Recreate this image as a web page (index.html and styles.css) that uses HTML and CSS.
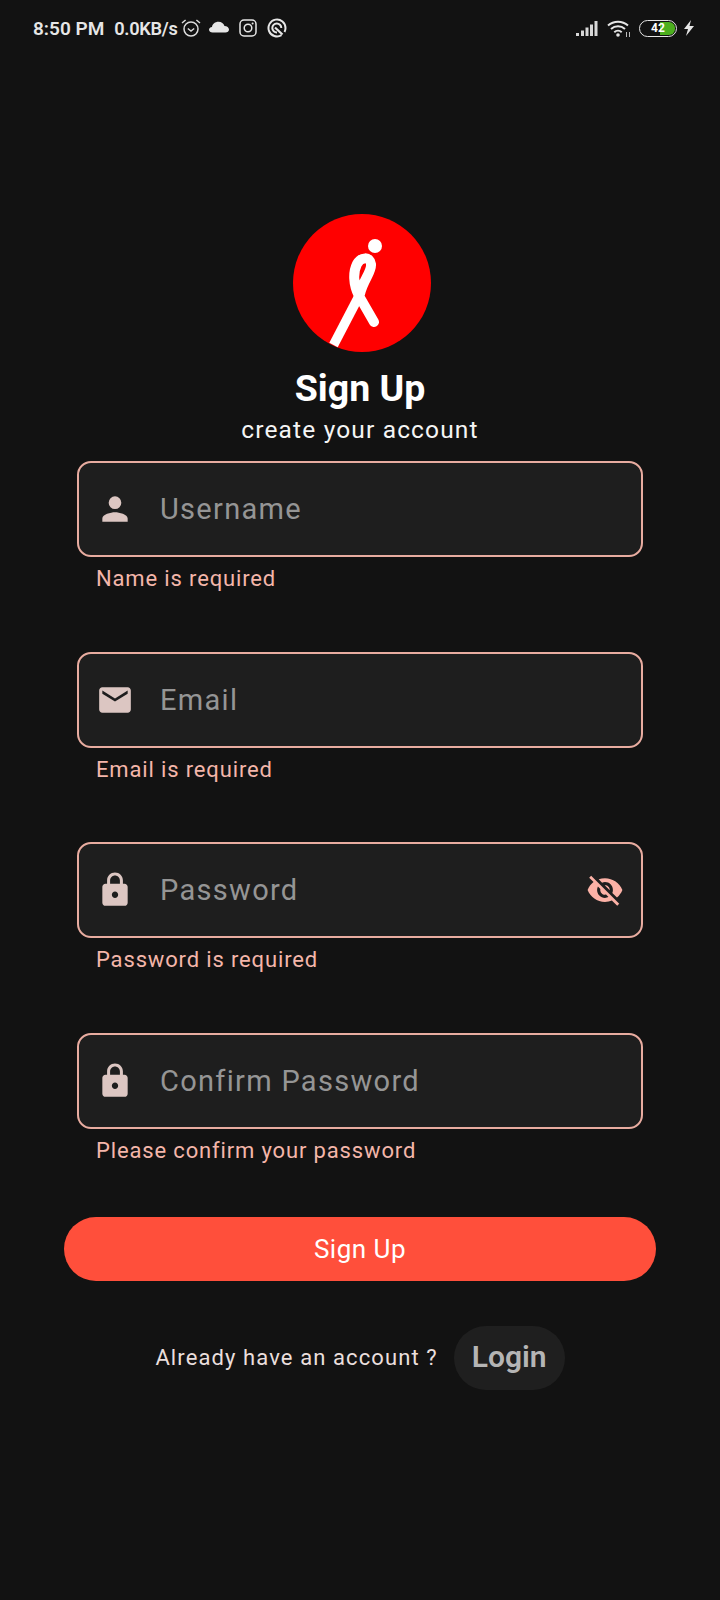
FILE: index.html
```html
<!DOCTYPE html>
<html lang="en">
<head>
    <meta charset="UTF-8">
    <meta name="viewport" content="width=device-width, initial-scale=1.0">
    <title>Sign Up</title>
    <link rel="stylesheet" href="styles.css">
</head>
<body>
    <div class="status-bar">
        <div class="status-left">
            <span class="status-time">8:50 PM</span>
            <span class="status-speed">0.0KB/s</span>
            <svg class="status-icon alarm-icon" viewBox="0 0 20 20"><circle cx="10" cy="11" r="7" fill="none" stroke="#ddd" stroke-width="1.5"/><path d="M6.800 10.500 10 13l3.200-2.500" fill="none" stroke="#ddd" stroke-width="1.400"/><path d="M1 5l3.600-3M19 5l-3.600-3" stroke="#ddd" stroke-width="1.500"/></svg>
            <svg class="status-icon cloud-icon" viewBox="0 0 20 12"><path d="M3.500 11.500C1.500 11.500 0 10.300 0 8.700 0 7.300 1.200 6.200 3 6 3.500 3 6 .8 9.500.8c3 0 5.200 1.700 6 4.200 2.500.2 4.500 1.600 4.500 3.500 0 1.800-1.600 3-3.500 3z" fill="#e6e6e6"/></svg>
            <svg class="status-icon insta-icon" viewBox="0 0 18 18"><rect x="1" y="1" width="16" height="16" rx="4" fill="none" stroke="#e6e6e6" stroke-width="1.500"/><circle cx="9" cy="9" r="3.800" fill="none" stroke="#e6e6e6" stroke-width="1.500"/><circle cx="13.600" cy="4.400" r="1" fill="#e6e6e6"/></svg>
            <svg class="status-icon q-icon" viewBox="0 0 20 20"><path d="M14.500 17.200A8.500 8.500 0 1 1 18.500 10c0 1.500-.4 2.800-1 4" fill="none" stroke="#e6e6e6" stroke-width="2"/><path d="M14.300 10A4.500 4.500 0 1 0 10 14.500" fill="none" stroke="#e6e6e6" stroke-width="2"/><path d="M8 9.500l7.500 7" stroke="#e6e6e6" stroke-width="2.200" fill="none"/></svg>
        </div>
        <div class="status-right">
            <svg class="signal-icon" viewBox="0 0 22 16"><path d="M0 13h3v3H0zM5 10.500h3V16H5zM9.500 7.500h3V16h-3zM14 4.500h3V16h-3zM18.500 1h3v15h-3z" fill="#d8d8d8"/></svg>
            <svg class="wifi-icon" viewBox="0 0 24 18"><path d="M1 6.500a15 15 0 0 1 20 0M4 10a10.500 10.500 0 0 1 14 0M7.300 13.200a5.600 5.600 0 0 1 7.400 0" fill="none" stroke="#e6e6e6" stroke-width="2"/><circle cx="11" cy="16" r="1.800" fill="#e6e6e6"/><path d="M19 13h1v5h-1zM22 13h1v5h-1z" fill="#bbb"/></svg>
            <div class="battery"><span class="battery-level"></span><span class="battery-text">42</span></div>
            <svg class="bolt-icon" viewBox="0 0 12 16"><path d="M8 0 1 9h4l-2 7 8-10H6.500z" fill="#e6e6e6"/></svg>
        </div>
    </div>

    <div class="logo">
        <svg viewBox="0 0 138 138">
            <circle cx="69" cy="69" r="69" fill="#ff0000"/>
            <path d="M40.500 131 65 84" fill="none" stroke="#fff" stroke-width="9.500"/>
            <path d="M81 108 66 82C60 70 60 58 64 50 68 43 77 42 78 50 79 58 70 66 67 80" fill="none" stroke="#fff" stroke-width="10" stroke-linecap="round"/>
            <circle cx="82" cy="32" r="7" fill="#fff"/>
        </svg>
    </div>
    <h1 class="title">Sign Up</h1>
    <p class="subtitle">create your account</p>

    <form class="signup-form">
        <div class="field">
            <div class="input-box">
                <svg class="field-icon" viewBox="0 0 24 24"><path d="M12 12a4 4 0 1 0 0-8 4 4 0 0 0 0 8zm0 2c-2.670 0-8 1.340-8 4v2h16v-2c0-2.660-5.330-4-8-4z"/></svg>
                <span class="placeholder">Username</span>
            </div>
            <div class="error">Name is required</div>
        </div>
        <div class="field">
            <div class="input-box">
                <svg class="field-icon" viewBox="0 0 24 24"><path d="M20 4H4c-1.100 0-2 .9-2 2v12c0 1.100.9 2 2 2h16c1.100 0 2-.9 2-2V6c0-1.100-.9-2-2-2zm0 4-8 5-8-5V6l8 5 8-5v2z"/></svg>
                <span class="placeholder">Email</span>
            </div>
            <div class="error">Email is required</div>
        </div>
        <div class="field">
            <div class="input-box">
                <svg class="field-icon" viewBox="0 0 24 24"><path d="M18 8h-1V6c0-2.760-2.240-5-5-5S7 3.240 7 6v2H6c-1.100 0-2 .9-2 2v10c0 1.100.9 2 2 2h12c1.100 0 2-.9 2-2V10c0-1.100-.9-2-2-2zm-6 9c-1.100 0-2-.9-2-2s.9-2 2-2 2 .9 2 2-.9 2-2 2zm3.100-9H8.900V6c0-1.710 1.390-3.100 3.100-3.100s3.100 1.390 3.100 3.100v2z"/></svg>
                <span class="placeholder">Password</span>
                <svg class="eye-icon" viewBox="0 0 24 24"><path d="M12 7c2.760 0 5 2.240 5 5 0 .65-.13 1.260-.36 1.830l2.920 2.920c1.510-1.260 2.700-2.890 3.430-4.750-1.730-4.390-6-7.500-11-7.500-1.400 0-2.740.25-3.980.7l2.160 2.160C10.740 7.130 11.350 7 12 7zM2 4.270l2.280 2.280.46.46C3.080 8.300 1.780 10.020 1 12c1.730 4.390 6 7.500 11 7.500 1.550 0 3.030-.3 4.380-.84l.42.42L19.730 22 21 20.730 3.270 3 2 4.270zM7.530 9.800l1.550 1.550c-.05.21-.08.430-.08.650 0 1.660 1.340 3 3 3 .22 0 .44-.03.650-.08l1.550 1.550c-.67.33-1.410.53-2.200.53-2.760 0-5-2.240-5-5 0-.79.2-1.530.53-2.200zm4.310-.78 3.150 3.150.02-.16c0-1.660-1.340-3-3-3l-.17.010z"/></svg>
            </div>
            <div class="error">Password is required</div>
        </div>
        <div class="field">
            <div class="input-box">
                <svg class="field-icon" viewBox="0 0 24 24"><path d="M18 8h-1V6c0-2.760-2.240-5-5-5S7 3.240 7 6v2H6c-1.100 0-2 .9-2 2v10c0 1.100.9 2 2 2h12c1.100 0 2-.9 2-2V10c0-1.100-.9-2-2-2zm-6 9c-1.100 0-2-.9-2-2s.9-2 2-2 2 .9 2 2-.9 2-2 2zm3.100-9H8.900V6c0-1.710 1.390-3.100 3.100-3.100s3.100 1.390 3.100 3.100v2z"/></svg>
                <span class="placeholder">Confirm Password</span>
            </div>
            <div class="error">Please confirm your password</div>
        </div>
    </form>

    <button class="signup-btn" type="button">Sign Up</button>

    <div class="login-row">
        <span class="login-text">Already have an account ?</span>
        <button class="login-btn" type="button">Login</button>
    </div>
</body>
</html>
```

FILE: styles.css
```css
* {
    box-sizing: border-box;
}

body {
    margin: 0;
    min-height: 1600px;
    background-color: #121212;
    color: #fff;
    font-family: Roboto, sans-serif;
    display: flex;
    flex-direction: column;
    align-items: center;
}

/* status bar */
.status-bar {
    width: 100%;
    height: 56px;
    padding: 0 33px;
    display: flex;
    align-items: center;
    justify-content: space-between;
    color: #e6e6e6;
}

.status-left {
    display: flex;
    align-items: center;
}

.status-time,
.status-speed {
    font-size: 19px;
    font-weight: 600;
}

.status-speed {
    margin-left: 10px;
    font-size: 18.200px;
    letter-spacing: -0.3px;
}

.status-icon {
    display: block;
}

.alarm-icon {
    width: 20px;
    height: 20px;
    margin-left: 4px;
}

.cloud-icon {
    width: 20px;
    height: 12px;
    margin-left: 8px;
    margin-bottom: 3px;
}

.insta-icon {
    width: 18px;
    height: 18px;
    margin-left: 10px;
}

.q-icon {
    width: 20px;
    height: 20px;
    margin-left: 10px;
}

.status-right {
    display: flex;
    align-items: center;
    margin-right: -8px;
}

.signal-icon {
    width: 22px;
    height: 16px;
}

.wifi-icon {
    width: 24px;
    height: 18px;
    margin-left: 9px;
}

.battery {
    position: relative;
    width: 38px;
    height: 17px;
    margin-left: 8px;
    border: 1.500px solid #e6e6e6;
    border-radius: 9px;
    overflow: hidden;
}

.battery-level {
    position: absolute;
    top: 1px;
    bottom: 1px;
    right: 1px;
    width: 15px;
    background-color: #4caf1e;
    border-radius: 0 6px 6px 0;
}

.battery-text {
    position: relative;
    display: block;
    font-size: 12px;
    line-height: 14px;
    font-weight: 700;
    text-align: center;
    color: #fff;
}

.bolt-icon {
    width: 12px;
    height: 16px;
    margin-left: 6px;
}

/* logo and heading */
.logo {
    margin-top: 158px;
    margin-left: 4px;
    width: 138px;
    height: 138px;
}

.logo svg {
    display: block;
    width: 138px;
    height: 138px;
}

.title {
    margin: 9px 0 0;
    font-size: 37.500px;
    line-height: 54px;
    font-weight: 700;
    color: #fff;
}

.subtitle {
    margin: 0;
    font-size: 24.500px;
    line-height: 30px;
    letter-spacing: 1.150px;
    color: #f5f5f5;
}

/* form */
.signup-form {
    width: 566px;
    margin-top: 16px;
    display: flex;
    flex-direction: column;
}

.field {
    height: 190.500px;
}

.input-box {
    height: 96px;
    padding: 0 17px;
    display: flex;
    align-items: center;
    background-color: #1e1e1e;
    border: 2px solid #e8aca0;
    border-radius: 14px;
}

.field-icon {
    width: 38px;
    height: 38px;
    fill: #dcc6c2;
    flex-shrink: 0;
}

.placeholder {
    margin-left: 26px;
    font-size: 29px;
    letter-spacing: 1.300px;
    color: #959595;
}

.eye-icon {
    width: 38px;
    height: 38px;
    margin-left: auto;
    fill: #fbb1a6;
}

.error {
    margin-top: 8px;
    padding-left: 19px;
    font-size: 22px;
    line-height: 28px;
    letter-spacing: 0.850px;
    color: #f4b6aa;
}

/* buttons */
.signup-btn {
    width: 592px;
    height: 64px;
    margin-top: -6px;
    border: none;
    border-radius: 32px;
    background-color: #ff4f3b;
    color: #fff;
    font-family: Roboto, sans-serif;
    font-size: 26px;
    letter-spacing: 0.500px;
}

.login-row {
    margin-top: 45px;
    display: flex;
    align-items: center;
    gap: 16px;
}

.login-text {
    font-size: 22px;
    letter-spacing: 1.100px;
    padding-bottom: 2px;
    color: #eadfdd;
}

.login-btn {
    height: 64px;
    padding: 0 18px 4px;
    border: none;
    border-radius: 32px;
    background-color: #1f1f1f;
    color: #b5b5b5;
    font-family: Roboto, sans-serif;
    font-size: 30px;
    font-weight: 600;
}
```
